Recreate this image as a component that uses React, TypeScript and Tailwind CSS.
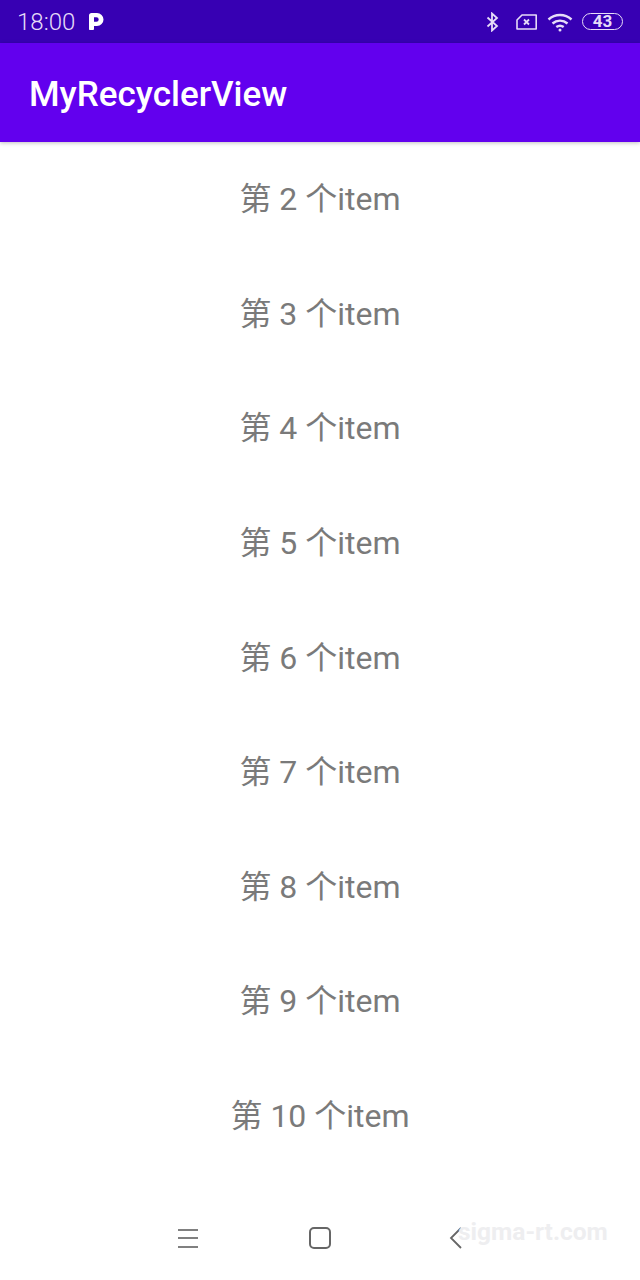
const items = [2, 3, 4, 5, 6, 7, 8, 9, 10];

const StatusBar = () => (
  <div className="flex h-[43px] shrink-0 items-center bg-[#3700B3] pl-[17px] pr-[17px] text-[#e6dcf8]">
    <span className="text-[24px] leading-none font-light">18:00</span>
    <svg className="ml-[13px]" width="16" height="19" viewBox="0 0 16 19">
      <path
        fillRule="evenodd"
        fill="#ffffff"
        d="M1 3.500C1 2 2 1 3.500 1H9a6.500 6.500 0 0 1 0 13H6v2.800c0 .8-.4 1.200-1.200 1.200H2c-.6 0-1-.4-1-1ZM6 5.200v4.600h2.400a2.300 2.300 0 0 0 0-4.600Z"
      />
    </svg>
    <div className="ml-auto flex items-center">
      {/* bluetooth */}
      <svg width="14" height="20" viewBox="0 0 14 20" fill="none" stroke="currentColor" strokeWidth="1.800">
        <path d="M2.500 5.500 12 14l-5 4.500v-17L12 6 2.500 14.500" />
      </svg>
      {/* no sim */}
      <svg className="ml-[16px]" width="23" height="18" viewBox="0 0 23 18" fill="none" stroke="currentColor" strokeWidth="1.600">
        <path d="M7 2h14.200v14H2V7Z" strokeLinejoin="round" />
        <path d="m9 6.500 5 5m0-5-5 5" strokeWidth="1.800" />
      </svg>
      {/* wifi */}
      <svg className="ml-[9px]" width="26" height="20" viewBox="0 0 26 20" fill="none" stroke="currentColor" strokeWidth="2.400">
        <path d="M1.500 7.500C8 1.500 18 1.500 24.500 7.500" />
        <path d="M5.500 11.500c4.300-3.800 10.700-3.800 15 0" />
        <path d="M9.300 15c2.200-1.600 5.200-1.600 7.400 0" />
        <circle cx="13" cy="18" r="1.500" fill="currentColor" stroke="none" />
      </svg>
      <div className="ml-[9px] flex h-[17px] w-[41px] items-center justify-center rounded-full border-[1.5px] border-[#e6dcf8] text-[17px] leading-none font-bold">
        43
      </div>
    </div>
  </div>
);

const NavBar = () => (
  <div className="relative flex h-[84px] shrink-0 items-center bg-white">
    <div className="ml-[178px] flex w-[20px] flex-col gap-[6.5px]">
      <div className="h-[2px] bg-[#808080]" />
      <div className="h-[2px] bg-[#808080]" />
      <div className="h-[2px] bg-[#808080]" />
    </div>
    <div className="ml-[112px] h-[22px] w-[22px] -translate-x-px rounded-[5px] border-2 border-[#666666]" />
    <svg className="ml-[117px]" width="14" height="22" viewBox="0 0 14 22" fill="none" stroke="#666666" strokeWidth="1.800">
      <path d="M12 1 2 11l10 10" />
    </svg>
    <span className="absolute top-[22px] left-[458px] text-[24.5px] leading-[28px] font-bold text-[#eeeef0]">
      sigma-rt.com
    </span>
  </div>
);

export default function App() {
  return (
    <div
      className="flex h-screen flex-col overflow-hidden bg-white"
      style={{ fontFamily: 'Roboto, "Noto Sans CJK SC", sans-serif' }}
    >
      <StatusBar />

      <header className="z-10 flex h-[99px] shrink-0 items-center bg-[#6200EE] pl-[29px] shadow-[0_1px_4px_rgba(0,0,0,0.25)]">
        <h1 className="pt-[5px] text-[35px] font-medium text-white">MyRecyclerView</h1>
      </header>

      <main className="flex-1 overflow-hidden">
        {items.map((n) => (
          <div key={n} className="flex h-[114.6px] items-center justify-center text-[32px] text-[#7a7a7a]">
            第 {n} 个item
          </div>
        ))}
      </main>

      <NavBar />
    </div>
  );
}
